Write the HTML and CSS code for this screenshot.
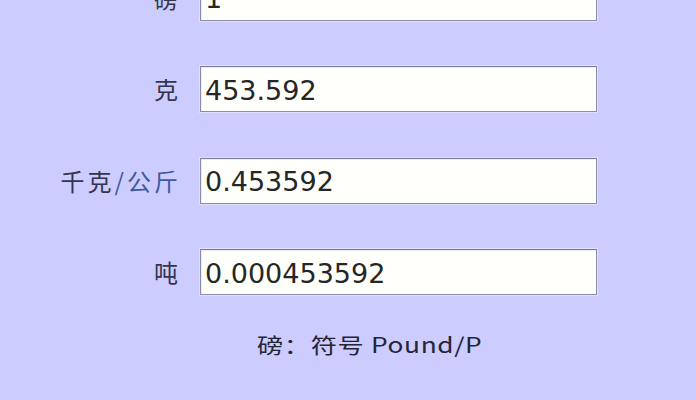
FILE: index.html
```html
<!DOCTYPE html>
<html lang="zh-CN">
<head>
<meta charset="utf-8">
<title>重量单位换算</title>
<link rel="stylesheet" href="styles.css">
</head>
<body>
<main class="converter">
  <div class="rows">
    <label class="unit" for="lb">磅</label>
    <input class="field" id="lb" type="text" value="1">

    <label class="unit" for="g">克</label>
    <input class="field" id="g" type="text" value="453.592">

    <label class="unit" for="kg">千克<span class="alt">/公斤</span></label>
    <input class="field" id="kg" type="text" value="0.453592">

    <label class="unit" for="t">吨</label>
    <input class="field" id="t" type="text" value="0.000453592">
  </div>
  <p class="note"><span class="note-text">磅：符号 Pound/P</span></p>
</main>
</body>
</html>
```

FILE: styles.css
```css
html, body {
  margin: 0;
  padding: 0;
  background: #ccccff;
}

body {
  height: 400px;
  overflow: hidden;
  font-family: "Noto Sans CJK SC", "Noto Sans", sans-serif;
  color: #2e2e48;
}

.converter {
  display: flex;
  flex-direction: column;
}

.rows {
  display: grid;
  grid-template-columns: 178px 397px;
  column-gap: 22px;
  row-gap: 45.5px;
  margin-top: -25.5px;
}

.unit {
  align-self: center;
  justify-self: end;
  margin-right: -3px;
  font-size: 24px;
  letter-spacing: 3px;
  line-height: 1;
  color: #34344e;
}

.unit .alt {
  color: #3d5a9c;
}

.field {
  box-sizing: border-box;
  width: 397px;
  height: 46px;
  margin: 0;
  padding: 2px 4px 0;
  border: 1px solid #8c8ca6;
  border-top-color: #7a7a94;
  background: #fffffc;
  box-shadow: 0 0 0 1px rgba(235, 235, 255, 0.6), inset 1px 1px 1px rgba(0, 0, 0, 0.08);
  font-family: "DejaVu Sans", sans-serif;
  font-size: 27px;
  color: #262626;
  outline: none;
}

.note {
  margin: 37px 0 0;
  padding-left: 257px;
  font-size: 21px;
  line-height: 24px;
  color: #242436;
}

.note-text {
  display: inline-block;
  letter-spacing: 0.5px;
  transform: scaleX(1.25);
  transform-origin: left center;
}
```
